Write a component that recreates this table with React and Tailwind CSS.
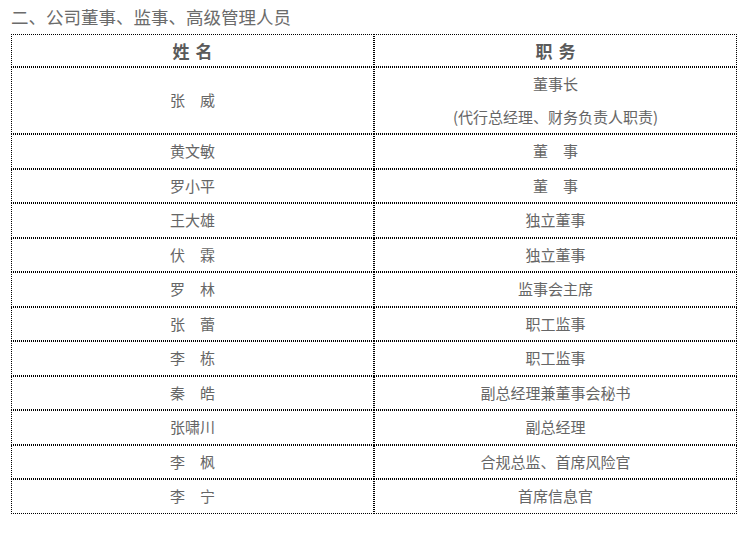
import React from "react";

const rows = [
  ["黄文敏", "董　事"],
  ["罗小平", "董　事"],
  ["王大雄", "独立董事"],
  ["伏　霖", "独立董事"],
  ["罗　林", "监事会主席"],
  ["张　蕾", "职工监事"],
  ["李　栋", "职工监事"],
  ["秦　皓", "副总经理兼董事会秘书"],
  ["张啸川", "副总经理"],
  ["李　枫", "合规总监、首席风险官"],
  ["李　宁", "首席信息官"],
];

const cell = "border border-dotted border-black p-0 text-center align-middle";

export default function App() {
  return (
    <div
      className="w-[754px] h-[536px] bg-white text-[#666666]"
      style={{ fontFamily: '"Noto Sans CJK SC", "Noto Sans", sans-serif' }}
    >
      <div className="pl-[11px] h-[34px] text-[17.5px] leading-[34px] text-[#6b6b6b]">
        二、公司董事、监事、高级管理人员
      </div>
      <table className="ml-[11px] w-[726px] border-separate border-spacing-0 table-fixed">
        <colgroup>
          <col className="w-[363px]" />
          <col className="w-[363px]" />
        </colgroup>
        <tbody>
          <tr>
            <td className={`${cell} text-[17px] font-bold leading-[31px] text-[#5a5a5a]`}>
              姓<span className="inline-block w-[6px]"> </span>名
            </td>
            <td className={`${cell} text-[17px] font-bold leading-[31px] text-[#5a5a5a]`}>
              职<span className="inline-block w-[6px]"> </span>务
            </td>
          </tr>
          <tr>
            <td className={`${cell} text-[15px] leading-[32.5px]`}>张　威</td>
            <td className={`${cell} text-[15px] leading-[32.5px]`}>
              <div>董事长</div>
              <div>(代行总经理、财务负责人职责)</div>
            </td>
          </tr>
          {rows.map(([n, p]) => (
            <tr key={n}>
              <td className={`${cell} text-[15px] leading-[32.5px]`}>{n}</td>
              <td className={`${cell} text-[15px] leading-[32.5px]`}>{p}</td>
            </tr>
          ))}
        </tbody>
      </table>
    </div>
  );
}
